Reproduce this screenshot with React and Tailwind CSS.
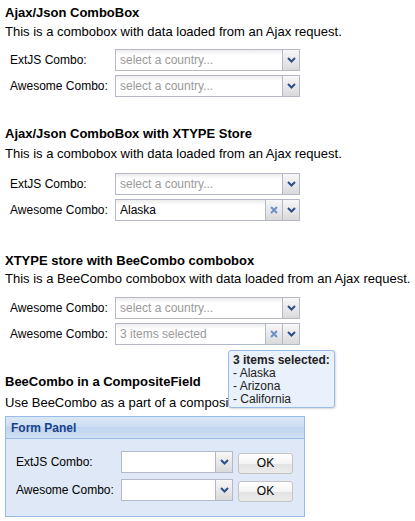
import React from "react";

const Chevron = () => (
  <svg width="9" height="6" viewBox="0 0 9 6">
    <polyline points="1,1 4.5,4.5 8,1" fill="none" stroke="#2c4f8c" strokeWidth="2" />
  </svg>
);

const Cross = () => (
  <svg width="8" height="8" viewBox="0 0 8 8">
    <path d="M1 1 L7 7 M7 1 L1 7" stroke="#6b93c9" strokeWidth="2" />
  </svg>
);

const Trigger = ({ children }) => (
  <div className="w-[17px] h-full flex items-center justify-center border-l border-[#b5b8c8] bg-[linear-gradient(#f7f7f7,#e6e6e6_60%,#d9d9d9)]">
    {children}
  </div>
);

const Combo = ({ value, placeholder, clear, width = "w-[185px]", plain }) => (
  <div
    className={`${width} h-[22px] flex border border-[#b5b8c8] ${
      plain ? "bg-white" : "bg-[linear-gradient(#ececec,#ffffff_5px)]"
    }`}
  >
    <div
      className={`flex-1 pl-[4px] flex items-center text-[12px] truncate ${
        value ? "text-black" : "text-[#9a9a9a]"
      }`}
    >
      {value || placeholder}
    </div>
    {clear && (
      <Trigger>
        <Cross />
      </Trigger>
    )}
    <Trigger>
      <Chevron />
    </Trigger>
  </div>
);

const Row = ({ label, ...props }) => (
  <div className="flex items-center pl-[5px]">
    <div className="w-[105px] text-[12px] text-black">{label}</div>
    <Combo {...props} />
  </div>
);

const Heading = ({ children, className }) => (
  <h2 className={`text-[13px] leading-[16px] font-bold text-black ${className}`}>{children}</h2>
);

const Desc = ({ children, className }) => (
  <p className={`text-[13px] leading-[16px] text-black whitespace-nowrap ${className}`}>{children}</p>
);

const OkButton = () => (
  <button className="w-[55px] h-[21px] rounded-[3px] border border-[#c4c4c4] bg-[linear-gradient(#ffffff,#f4f4f4_50%,#e2e2e2_51%,#ebebeb)] text-[12px] text-black">
    OK
  </button>
);

export default function App() {
  const sel = "select a country...";
  return (
    <div className="w-[415px] h-[521px] bg-white px-[5px] font-['Liberation_Sans',Arial,sans-serif] overflow-hidden">
      {/* section 1 */}
      <Heading className="pt-[5px]">Ajax/Json ComboBox</Heading>
      <Desc className="mt-[3px]">This is a combobox with data loaded from an Ajax request.</Desc>
      <div className="mt-[9px] flex flex-col gap-[4px]">
        <Row label="ExtJS Combo:" placeholder={sel} />
        <Row label="Awesome Combo:" placeholder={sel} />
      </div>

      {/* section 2 */}
      <Heading className="mt-[29px]">Ajax/Json ComboBox with XTYPE Store</Heading>
      <Desc className="mt-[4px]">This is a combobox with data loaded from an Ajax request.</Desc>
      <div className="mt-[11px] flex flex-col gap-[4px]">
        <Row label="ExtJS Combo:" placeholder={sel} />
        <Row label="Awesome Combo:" value="Alaska" clear />
      </div>

      {/* section 3 */}
      <Heading className="mt-[32px]">XTYPE store with BeeCombo combobox</Heading>
      <Desc className="mt-[2px]">This is a BeeCombo combobox with data loaded from an Ajax request.</Desc>
      <div className="relative mt-[10px] flex flex-col gap-[4px]">
        <Row label="Awesome Combo:" placeholder={sel} />
        <Row label="Awesome Combo:" placeholder="3 items selected" clear />
        <div className="absolute left-[223px] top-[53px] z-10 w-[107px] h-[58px] rounded-[3px] border border-[#99bbe8] bg-[#e9f1fc] shadow-[1px_1px_2px_rgba(0,0,0,0.15)] px-[4px] pt-[3px] text-[12px] leading-[13px] text-[#222]">
          <div className="font-bold">3 items selected:</div>
          <div>- Alaska</div>
          <div>- Arizona</div>
          <div>- California</div>
        </div>
      </div>

      {/* section 4 */}
      <Heading className="mt-[29px]">BeeCombo in a CompositeField</Heading>
      <Desc className="mt-[5px]">Use BeeCombo as a part of a composite</Desc>

      <div className="mt-[5px] w-[300px] h-[101px] border border-[#99bbe8] bg-[#dfe8f6] flex flex-col">
        <div className="h-[22px] border-b border-[#99bbe8] bg-[linear-gradient(#dae7f6,#cddef3_45%,#c0d4ee_50%,#cfdff4)] flex items-center pl-[5px] text-[12px] font-bold text-[#15428b]">
          Form Panel
        </div>
        <div className="pt-[11px] pl-[10px] flex flex-col gap-[4px]">
          {["ExtJS Combo:", "Awesome Combo:"].map((l) => (
            <div key={l} className="flex items-center">
              <div className="w-[105px] text-[12px] text-black">{l}</div>
              <Combo width="w-[112px]" plain />
              <div className="ml-[5px]">
                <OkButton />
              </div>
            </div>
          ))}
        </div>
      </div>
    </div>
  );
}
